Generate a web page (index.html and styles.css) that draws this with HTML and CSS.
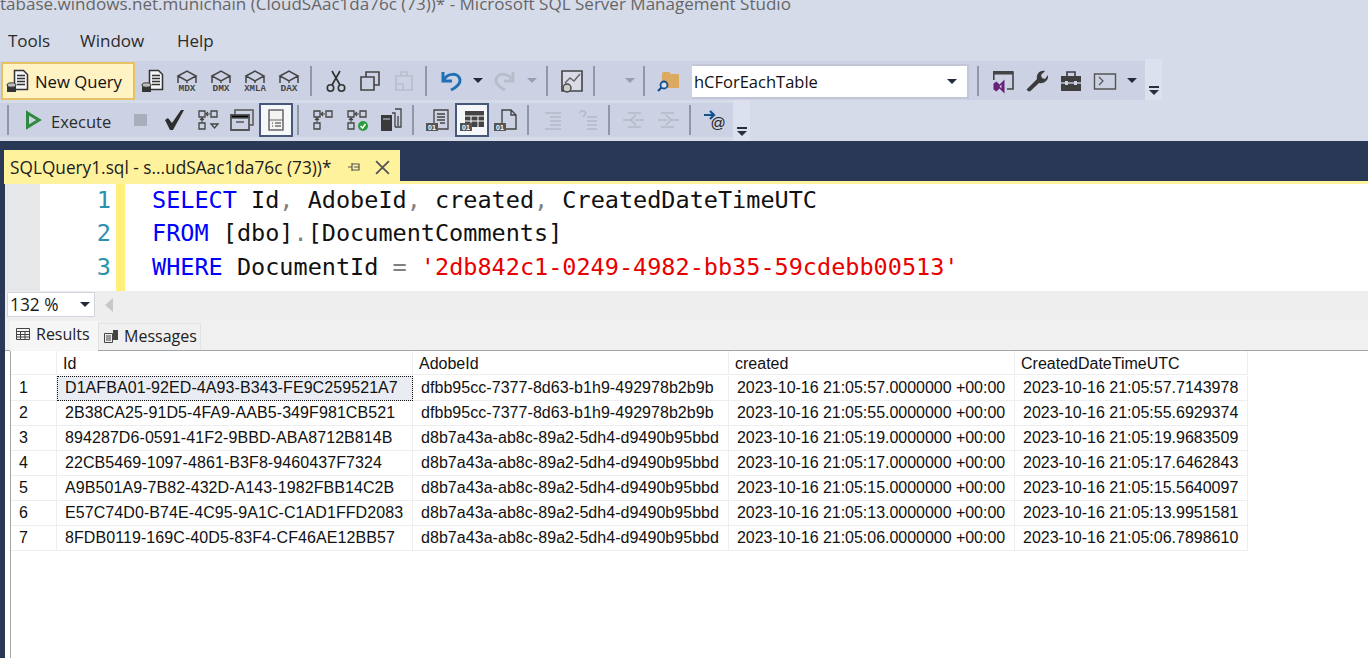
FILE: index.html
```html
<!DOCTYPE html>
<html lang="en">
<head>
<meta charset="utf-8">
<title>Microsoft SQL Server Management Studio</title>
<link rel="stylesheet" href="styles.css">
</head>
<body>
<svg class="defs" width="0" height="0" aria-hidden="true">
  <defs>
    <symbol id="cube" viewBox="0 0 24 24"><path d="M3 7 12 2l9 5-9 5zM3 7v7M21 7v7M12 12v2" fill="none" stroke="#444" stroke-width="1.500"/></symbol>
    <symbol id="qdoc" viewBox="0 0 24 24"><path d="M8.500 1.500h9l4 4v15h-13z" fill="#f4f5f8" stroke="#333" stroke-width="1.500"/><path d="M11 6.500h8M11 9.500h8M11 12.500h8M11 15.500h8" stroke="#333" stroke-width="1.400"/><path d="M1 16h9v7H1z" fill="#333"/><ellipse cx="5.500" cy="16" rx="4.500" ry="2.200" fill="#bbb" stroke="#333"/></symbol>
    <symbol id="arrows" viewBox="0 0 24 24"><path d="M3 3h6v6H3zM15 3h6v6h-6zM3 15h6v6H3z" fill="none" stroke="#444" stroke-width="1.300"/><path d="M14 6h-4M12 4 10 6l2 2M6 14v-4M4 12l2-2 2 2" fill="none" stroke="#444" stroke-width="1.200"/></symbol>
    <symbol id="bin" viewBox="0 0 24 24"><path d="M0 15h12v8H0z" fill="#555"/><text x="6" y="22" class="mini">01</text></symbol>
  </defs>
</svg>
<header class="chrome">
  <div class="title">tabase.windows.net.munichain (CloudSAac1da76c (73))* - Microsoft SQL Server Management Studio</div>
  <nav class="menu"><span class="menu-tools">Tools</span><span class="menu-window">Window</span><span>Help</span></nav>

  <div class="tbrow">
    <div class="tb tb-one">
      <button class="newq"><svg class="ic" viewBox="0 0 24 24"><use href="#qdoc"/></svg><span>New Query</span></button>
      <span class="ib ib-first"><svg class="ic"><use href="#qdoc"/></svg></span>
      <span class="ib"><svg class="ic" viewBox="0 0 24 24"><use href="#cube"/><text x="12" y="22" class="cap">MDX</text></svg></span>
      <span class="ib"><svg class="ic" viewBox="0 0 24 24"><use href="#cube"/><text x="12" y="22" class="cap">DMX</text></svg></span>
      <span class="ib"><svg class="ic" viewBox="0 0 24 24"><use href="#cube"/><text x="12" y="22" class="cap cap-long">XMLA</text></svg></span>
      <span class="ib"><svg class="ic" viewBox="0 0 24 24"><use href="#cube"/><text x="12" y="22" class="cap">DAX</text></svg></span>
      <i class="sep"></i>
      <span class="ib"><svg class="ic" viewBox="0 0 24 24"><circle cx="6.500" cy="19" r="3.200" fill="none" stroke="#333" stroke-width="1.600"/><circle cx="17.500" cy="19" r="3.200" fill="none" stroke="#333" stroke-width="1.600"/><path d="M8 16 16 2M16 16 8 2" stroke="#333" stroke-width="1.700"/></svg></span>
      <span class="ib"><svg class="ic" viewBox="0 0 24 24"><path d="M8 8V3h13v13h-5" fill="none" stroke="#444" stroke-width="1.600"/><path d="M3 8h13v13H3z" fill="none" stroke="#444" stroke-width="1.600"/></svg></span>
      <span class="ib"><svg class="ic" viewBox="0 0 24 24"><path d="M4 7h16v14H4zM9 7V3h6v4M4 15h7v6" fill="none" stroke="#b9bdcb" stroke-width="1.600"/></svg></span>
      <i class="sep"></i>
      <span class="ib"><svg class="ic" viewBox="0 0 24 24"><path d="M4 3v9h9" fill="none" stroke="#1f6fb5" stroke-width="3"/><path d="M5 11C8 4 20 3 21 11c.5 5-5 8-9 10" fill="none" stroke="#1f6fb5" stroke-width="3"/></svg></span>
      <span class="dd"><i class="caret caret-dark"></i></span>
      <span class="ib"><svg class="ic" viewBox="0 0 24 24"><path d="M20 3v9h-9" fill="none" stroke="#b9bdca" stroke-width="3"/><path d="M19 11C16 4 4 3 3 11c-.5 5 5 8 9 10" fill="none" stroke="#b9bdca" stroke-width="3"/></svg></span>
      <span class="dd"><i class="caret caret-off"></i></span>
      <i class="sep"></i>
      <span class="ib"><svg class="ic" viewBox="0 0 24 24"><path d="M2 2h20v20H2z" fill="#d9dce6" stroke="#444" stroke-width="1.600"/><path d="M5 14l5-5 4 3 6-7" fill="none" stroke="#666" stroke-width="1.400"/><circle cx="7" cy="19" r="4" fill="#ccc" stroke="#444" stroke-width="1.400"/></svg></span>
      <i class="sep"></i>
      <span class="dd dd-wide"><i class="caret caret-off"></i></span>
      <i class="sep"></i>
      <span class="ib"><svg class="ic" viewBox="0 0 24 24"><path d="M5 15V5q0-2 2-2h5l2 2h8v14H9z" fill="#dcaa5e"/><circle cx="7" cy="16" r="3.500" fill="#d6e2f2" stroke="#14508c" stroke-width="1.800"/><path d="M4.500 18.500 1 22" stroke="#14508c" stroke-width="2.200"/></svg></span>
      <div class="combo"><span>hCForEachTable</span><i class="caret caret-dark"></i></div>
      <i class="sep"></i>
      <span class="ib"><svg class="ic" viewBox="0 0 24 24"><path d="M2 3h20v17h-6" fill="none" stroke="#444" stroke-width="1.600"/><path d="M2 2h20v3.500H2zM2 2h1.600v9H2z" fill="#444"/><path d="M2.500 14.500l3-2 3 3 5-5v14l-5-5-3 3-3-2z" fill="#68217a"/><path d="M6.500 15.500l2 2 2-2v4z" fill="#ccd2e3"/></svg></span>
      <span class="ib"><svg class="ic" viewBox="0 0 24 24"><path d="M3 22 1.500 20.500 12 10c-1-4 2-9 8-8l-4 4 1 3 3 1 3-4c1 6-5 9-9 8L5 22.500z" fill="#3a3a3a"/></svg></span>
      <span class="ib"><svg class="ic" viewBox="0 0 24 24"><path d="M2 7h20v15H2z" fill="#3f3f3f"/><path d="M8 7V3h8v4" fill="none" stroke="#3f3f3f" stroke-width="1.600"/><path d="M2 14h20" stroke="#ccd2e3" stroke-width="1.400"/><path d="M6 12h3v4H6zM15 12h3v4h-3z" fill="#ccd2e3"/></svg></span>
      <span class="ib"><svg class="ic" viewBox="0 0 24 24"><path d="M1.500 5h21v15h-21z" fill="none" stroke="#555" stroke-width="1.400"/><path d="M6 8l4 4-4 4" fill="none" stroke="#555" stroke-width="1.200"/></svg></span>
      <span class="dd"><i class="caret caret-dark"></i></span>
    </div>
    <div class="tail"><i class="grip"></i></div>
  </div>

  <div class="tbrow">
    <div class="tb tb-two">
      <i class="sep"></i>
      <span class="ib"><svg class="ic" viewBox="0 0 24 24"><path d="M6.500 5 18 12 6.500 19z" fill="none" stroke="#2d8a3e" stroke-width="3"/></svg></span>
      <span class="exec">Execute</span>
      <span class="ib"><i class="stop"></i></span>
      <span class="ib"><svg class="ic" viewBox="0 0 24 24"><path d="M3 12l3-2 4 5L19 2h3L11 22H8z" fill="#2e2e2e"/></svg></span>
      <span class="ib"><svg class="ic" viewBox="0 0 24 24"><use href="#arrows"/><path d="M15 16h7l-3.500 4z" fill="none" stroke="#444" stroke-width="1.300"/></svg></span>
      <span class="ib"><svg class="ic" viewBox="0 0 24 24"><path d="M5 2h18v15H5z" fill="#ccd2e3" stroke="#555" stroke-width="1.500"/><path d="M1 7h18v15H1z" fill="#ccd2e3" stroke="#555" stroke-width="1.800"/><path d="M1 7h18v3H1zM6 14h8" stroke="#555" stroke-width="1.500"/></svg></span>
      <span class="ib ib-on"><svg class="ic" viewBox="0 0 24 24"><path d="M5 2h14v20H5z" fill="#f4f4f4" stroke="#666" stroke-width="1.500"/><path d="M5 12h14" stroke="#666"/><path d="M8 15h1M11 15h6M8 18h1M11 18h6" stroke="#333" stroke-width="1.200"/></svg></span>
      <i class="sep"></i>
      <span class="ib"><svg class="ic"  viewBox="0 0 24 24"><use href="#arrows"/></svg></span>
      <span class="ib"><svg class="ic" viewBox="0 0 24 24"><use href="#arrows"/><circle cx="18" cy="18" r="5" fill="#2c9c3f"/><path d="M15.500 18l2 2 3-4" fill="none" stroke="#fff" stroke-width="1.500"/></svg></span>
      <span class="ib"><svg class="ic" viewBox="0 0 24 24"><path d="M2 7h11v16H2z" fill="#3a3a3a"/><path d="M4 11h7" stroke="#ccd2e3"/><path d="M13 5h3v14M16 1h6v18h-6M19 8v10" fill="none" stroke="#444" stroke-width="1.300"/></svg></span>
      <i class="sep"></i>
      <span class="ib"><svg class="ic" viewBox="0 0 24 24"><path d="M8 15V2h14v19H12M11 6h8M11 9h8M11 12h8M14 15h5" fill="none" stroke="#444" stroke-width="1.300"/><use href="#bin"/></svg></span>
      <span class="ib ib-on"><svg class="ic" viewBox="0 0 24 24"><path d="M5 3h19v16H5z" fill="#444"/><path d="M5 8h19M11 8v11M18 8v11M5 13h19" stroke="#fff"/><use href="#bin"/></svg></span>
      <span class="ib"><svg class="ic" viewBox="0 0 24 24"><path d="M8 15V2h9l5 5v14H12M17 2v5h5" fill="none" stroke="#444" stroke-width="1.400"/><use href="#bin"/></svg></span>
      <i class="sep"></i>
      <span class="ib"><svg class="ic" viewBox="0 0 24 24"><path d="M4 5h16M9 9h11M9 13h11M9 17h11M4 21h16" stroke="#b4b9c8" stroke-width="1.400"/></svg></span>
      <span class="ib"><svg class="ic" viewBox="0 0 24 24"><path d="M12 9h10M12 13h10M12 17h10M12 21h10M4 5l2-2h3l2 2-3 4" fill="none" stroke="#b4b9c8" stroke-width="1.400"/></svg></span>
      <i class="sep"></i>
      <span class="ib"><svg class="ic" viewBox="0 0 24 24"><path d="M6 5h13M1 12h8M13 12h9M6 19h13" stroke="#b4b9c8" stroke-width="1.600"/><path d="M14 7l-5 5 5 5" fill="none" stroke="#b4b9c8" stroke-width="1.600"/></svg></span>
      <span class="ib"><svg class="ic" viewBox="0 0 24 24"><path d="M5 5h13M2 12h9M15 12h8M5 19h13" stroke="#b4b9c8" stroke-width="1.600"/><path d="M10 7l5 5-5 5" fill="none" stroke="#b4b9c8" stroke-width="1.600"/></svg></span>
      <i class="sep"></i>
      <span class="ib"><svg class="ic" viewBox="0 0 24 24"><path d="M1 7h9M7 3l4 4-4 4" fill="none" stroke="#14508c" stroke-width="2.200"/><text x="15" y="20" class="at">@</text></svg></span>
    </div>
    <div class="tail"><i class="grip"></i></div>
  </div>
</header>

<main class="doc">
  <div class="tabstrip">
    <div class="doctab">
      <span class="doctab-name">SQLQuery1.sql - s...udSAac1da76c (73))*</span>
      <svg class="pin" viewBox="0 0 14 14"><path d="M1 7h4M5 3v8M5 4h7v6H5M7 7h5" fill="none" stroke="#555" stroke-width="1.200"/></svg>
      <svg class="close" viewBox="0 0 14 14"><path d="M1 1l12 12M13 1 1 13" stroke="#555" stroke-width="1.700"/></svg>
    </div>
  </div>
  <div class="tabline"></div>
  <div class="pane">
    <section class="editor">
      <div class="gutter"></div>
      <div class="numbers"><span>1</span><span>2</span><span>3</span></div>
      <div class="change"></div>
      <pre class="code"><span class="kw">SELECT</span> Id<span class="op">,</span> AdobeId<span class="op">,</span> created<span class="op">,</span> CreatedDateTimeUTC
<span class="kw">FROM</span> [dbo]<span class="op">.</span>[DocumentComments]
<span class="kw">WHERE</span> DocumentId <span class="op">=</span> <span class="str">'2db842c1-0249-4982-bb35-59cdebb00513'</span></pre>
    </section>
    <div class="zoombar">
      <div class="zoomcombo"><span>132 %</span><i class="caret caret-dark"></i></div>
      <i class="scroll-left"></i>
    </div>
    <div class="restabs">
      <div class="restab restab-on">
        <svg class="tabic" viewBox="0 0 14 12"><path d="M.5.500h13v11H.5zM.5 3.500h13M.5 6.500h13M.5 9h13M4.500 3v8M9 3v8" fill="none" stroke="#444"/></svg>
        <span>Results</span>
      </div>
      <div class="restab">
        <svg class="tabic" viewBox="0 0 14 14"><path d="M.5 4.500h8v9h-8zM2 7h5M2 9h5M2 11h5" fill="#eee" stroke="#444"/><path d="M9 1h5v10H9z" fill="#444"/></svg>
        <span>Messages</span>
      </div>
    </div>
    <section class="gridwrap">
      <div class="grid">
        <div class="h"></div><div class="h">Id</div><div class="h">AdobeId</div><div class="h">created</div><div class="h">CreatedDateTimeUTC</div>

        <div class="n">1</div><div class="c c-id sel">D1AFBA01-92ED-4A93-B343-FE9C259521A7</div><div class="c c-adobe">dfbb95cc-7377-8d63-b1h9-492978b2b9b</div><div class="c c-date">2023-10-16 21:05:57.0000000 +00:00</div><div class="c">2023-10-16 21:05:57.7143978</div>
        <div class="n">2</div><div class="c c-id">2B38CA25-91D5-4FA9-AAB5-349F981CB521</div><div class="c c-adobe">dfbb95cc-7377-8d63-b1h9-492978b2b9b</div><div class="c c-date">2023-10-16 21:05:55.0000000 +00:00</div><div class="c">2023-10-16 21:05:55.6929374</div>
        <div class="n">3</div><div class="c c-id">894287D6-0591-41F2-9BBD-ABA8712B814B</div><div class="c c-adobe">d8b7a43a-ab8c-89a2-5dh4-d9490b95bbd</div><div class="c c-date">2023-10-16 21:05:19.0000000 +00:00</div><div class="c">2023-10-16 21:05:19.9683509</div>
        <div class="n">4</div><div class="c c-id">22CB5469-1097-4861-B3F8-9460437F7324</div><div class="c c-adobe">d8b7a43a-ab8c-89a2-5dh4-d9490b95bbd</div><div class="c c-date">2023-10-16 21:05:17.0000000 +00:00</div><div class="c">2023-10-16 21:05:17.6462843</div>
        <div class="n">5</div><div class="c c-id">A9B501A9-7B82-432D-A143-1982FBB14C2B</div><div class="c c-adobe">d8b7a43a-ab8c-89a2-5dh4-d9490b95bbd</div><div class="c c-date">2023-10-16 21:05:15.0000000 +00:00</div><div class="c">2023-10-16 21:05:15.5640097</div>
        <div class="n">6</div><div class="c c-id">E57C74D0-B74E-4C95-9A1C-C1AD1FFD2083</div><div class="c c-adobe">d8b7a43a-ab8c-89a2-5dh4-d9490b95bbd</div><div class="c c-date">2023-10-16 21:05:13.0000000 +00:00</div><div class="c">2023-10-16 21:05:13.9951581</div>
        <div class="n">7</div><div class="c c-id">8FDB0119-169C-40D5-83F4-CF46AE12BB57</div><div class="c c-adobe">d8b7a43a-ab8c-89a2-5dh4-d9490b95bbd</div><div class="c c-date">2023-10-16 21:05:06.0000000 +00:00</div><div class="c">2023-10-16 21:05:06.7898610</div>
      </div>
    </section>
  </div>
</main>
</body>
</html>
```
FILE: styles.css
```css
* { box-sizing: border-box; }
html, body { margin: 0; height: 100%; }
body {
  width: 1368px;
  height: 658px;
  overflow: hidden;
  display: flex;
  flex-direction: column;
  background: #d6dbe9;
  font-family: "Open Sans", "Noto Sans", sans-serif;
  color: #1a1a1a;
}
.defs { display: block; height: 0; }
.chrome { flex: none; height: 141px; }
.title {
  height: 27px;
  line-height: 8px;
  font-size: 17.050px;
  color: #666;
  white-space: nowrap;
  overflow: hidden;
}
.menu {
  height: 32px;
  display: flex;
  align-items: flex-start;
  padding: 2px 0 0 8px;
  font-size: 17px;
  line-height: 24px;
  color: #2b2b2b;
}
.menu-tools { width: 72px; }
.menu-window { width: 97px; }
.tbrow { display: flex; width: max-content; height: 41px; }
.tb {
  display: flex;
  align-items: center;
  background: #ccd2e3;
  margin: 2px 0;
}
.tb-one { width: 1145px; padding-left: 1px; height: 39px; }
.tb-two { width: 733px; padding-left: 3px; height: 34px; margin-top: 3px; }
.tail {
  width: 17px;
  background: #dde1ee;
  display: flex;
  align-items: flex-end;
  justify-content: center;
  padding: 0 0 6px 0;
}
.grip {
  width: 10px;
  height: 8px;
  border-top: 2px solid #2a2f3d;
  position: relative;
}
.grip::after {
  content: "";
  position: absolute;
  left: 0;
  top: 2px;
  border: 5px solid transparent;
  border-top-color: #2a2f3d;
  border-bottom: 0;
}
.newq {
  width: 134px;
  height: 38px;
  margin: 0;
  padding: 0 0 0 3px;
  border: 2px solid #e5c365;
  background: #fff2c3;
  display: flex;
  align-items: center;
  gap: 5px;
  font: 16.700px "Open Sans", sans-serif;
  color: #111;
  white-space: nowrap;
}
.newq span { padding-top: 2px; }
.ic { width: 24px; height: 24px; display: block; overflow: visible; }
.ib {
  flex: none;
  width: 34px;
  height: 34px;
  display: flex;
  align-items: center;
  justify-content: center;
}
.ib-first { margin-left: 1px; }
.ib-on { background: #f6f7fa; border: 2px solid #46597a; }
.sep {
  flex: none;
  width: 2px;
  height: 30px;
  background: #8f97a9;
  margin: 0 7px 0 4px;
}
.dd {
  flex: none;
  width: 20px;
  display: flex;
  justify-content: center;
}
.dd-wide { width: 37px; justify-content: flex-end; padding-right: 4px; }
.caret {
  display: block;
  width: 0;
  height: 0;
  border: 5px solid transparent;
  border-top: 5px solid #888;
  border-bottom: 0;
}
.caret-off { border-top-color: #9a9fad; }
.caret-dark { border-top-color: #222b3c; }
.cap {
  font: bold 9.500px "Liberation Mono", monospace;
  fill: #444;
  text-anchor: middle;
}
.cap-long { font-size: 9px; }
.mini { font: bold 7px "Liberation Sans", sans-serif; fill: #fff; text-anchor: middle; }
.at { font: 15px "Liberation Sans", sans-serif; fill: #222; text-anchor: middle; }
.combo {
  flex: none;
  width: 277px;
  height: 35px;
  margin: 2px 4px 0 6px;
  background: #fff;
  border: 2px solid #c2c6d6;
  border-left: 0;
  padding: 0 10px 0 2px;
  display: flex;
  align-items: center;
  justify-content: space-between;
  font-size: 16.500px;
  color: #111;
}
.exec {
  flex: none;
  width: 73px;
  padding: 2px 0 0 1px;
  font-size: 16.500px;
  color: #2b2b2b;
}
.stop { width: 13px; height: 12px; background: #a9aebd; }
.doc {
  flex: 1;
  min-height: 0;
  display: flex;
  flex-direction: column;
  background: #293955;
}
.tabstrip { flex: none; height: 40px; padding: 9px 0 0 4px; }
.doctab {
  width: 396px;
  height: 31px;
  background: #fff29d;
  display: flex;
  align-items: center;
  padding-left: 6px;
  font-size: 17.250px;
  color: #1c1c1c;
  white-space: nowrap;
}
.doctab-name { width: 337px; padding-top: 4px; }
.pin { width: 14px; height: 14px; flex: none; margin-top: 3px; }
.close { width: 15px; height: 15px; flex: none; margin: 3px 0 0 14px; }
.tabline { flex: none; height: 3px; margin-left: 4px; background: #fff29d; }
.pane {
  flex: 1;
  min-height: 0;
  margin-left: 5px;
  display: flex;
  flex-direction: column;
  background: #fff;
}
.editor { flex: none; height: 107px; display: flex; overflow: hidden; }
.gutter { width: 35px; background: #e6e7e8; }
.numbers {
  width: 71px;
  display: flex;
  flex-direction: column;
  align-items: flex-end;
  font: 23.500px/33.400px "DejaVu Sans Mono", monospace;
  color: #2b91af;
}
.change { width: 9px; margin-left: 5px; background: #fff07a; }
.code {
  margin: 0 0 0 27px;
  font: 23.500px/33.400px "DejaVu Sans Mono", monospace;
  color: #111;
}
.kw { color: #0000ff; }
.op { color: #808080; }
.str { color: #e80000; }
.zoombar {
  flex: none;
  height: 29px;
  display: flex;
  align-items: flex-start;
  background: #eeeeee;
  padding: 1px 0 0 2px;
}
.zoomcombo {
  width: 88px;
  height: 25px;
  background: #fff;
  border: 1px solid #d2d5dd;
  display: flex;
  align-items: center;
  justify-content: space-between;
  padding: 0 4px 0 2px;
  font-size: 17.300px;
}
.scroll-left {
  display: block;
  margin: 6px 0 0 10px;
  width: 0;
  height: 0;
  border: 7px solid transparent;
  border-right: 8px solid #c8c8c8;
  border-left: 0;
}
.restabs {
  flex: none;
  height: 31px;
  display: flex;
  align-items: flex-end;
  background: #f0f0f0;
  padding-left: 5px;
  border-bottom: 1px solid #a5a5a5;
}
.restab {
  height: 27px;
  display: flex;
  align-items: center;
  gap: 6px;
  padding: 0 3px 2px 5px;
  font-size: 16px;
  color: #222;
  border: 1px solid #e2e2e2;
  border-bottom: 0;
  white-space: nowrap;
}
.restab-on {
  width: 88px;
  height: 30px;
  background: #f6f6f6;
  border: 0;
  margin-bottom: -1px;
  padding: 0 0 5px 6px;
  gap: 6px;
}
.tabic { width: 14px; height: 14px; flex: none; }
.gridwrap { flex: 1; min-height: 0; padding-left: 5px; background: #fff; }
.grid {
  display: grid;
  grid-template-columns: 46px 356px 316px 286px 233px;
  grid-auto-rows: 25px;
  width: max-content;
  height: 100%;
  align-content: start;
  font-family: "Liberation Sans", sans-serif;
  font-size: 16px;
  color: #111;
  border-left: 1px solid #a5a5a5;
}
.h, .c, .n {
  display: flex;
  align-items: center;
  white-space: nowrap;
  border-right: 1px solid #eeeeee;
  border-bottom: 1px solid #eeeeee;
}
.h { padding: 2px 0 0 6px; height: 24px; }
.c { padding-left: 8px; }
.n { padding-left: 8px; }
.c-id { letter-spacing: .08px; }
.c-adobe { letter-spacing: .05px; }
.c-date { letter-spacing: -.03px; }
.sel { background: #e9edf3; outline: 1px dotted #111; outline-offset: -1px; }
```
